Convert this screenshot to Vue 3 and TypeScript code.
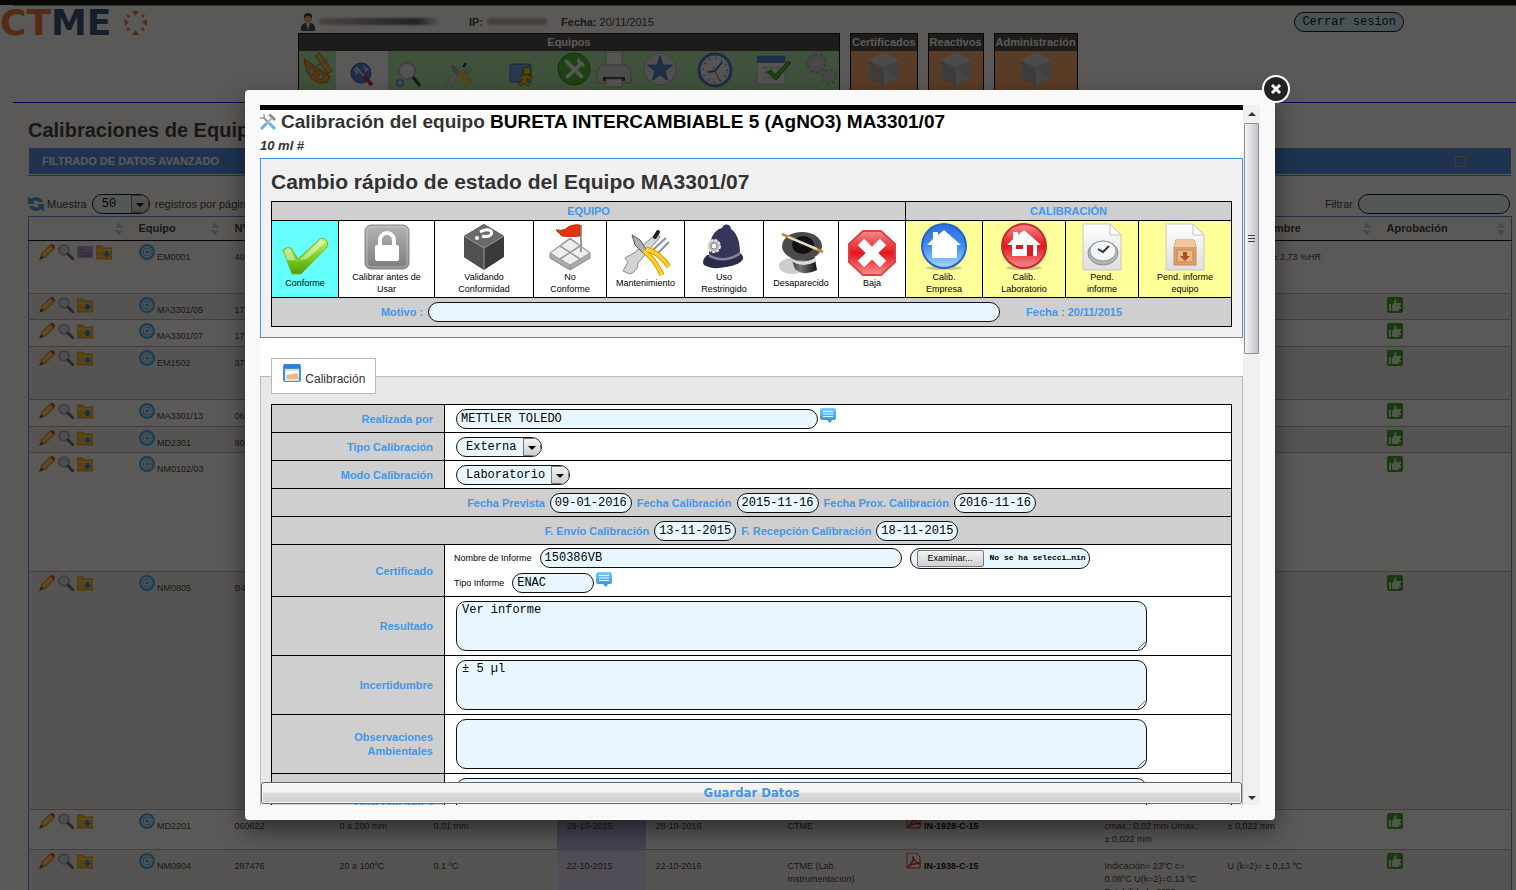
<script setup lang="ts">
import { ref } from 'vue'

interface Row {
  code: string
  serial: string
  height: number
  card?: boolean
  approved: boolean
  range?: string
  division?: string
  calibrated?: string
  next?: string
  lab?: string
  report?: string
  result?: string
  uncertainty?: string
}

interface Status {
  icon: string
  label: string
  tone: string
  width: number
}

const menuIcons = [
  { icon: 'protractor', width: 37, size: 34, low: false, plain: false },
  { icon: 'globe-tool', width: 52, size: 24, low: true, plain: true },
  { icon: 'zoom-add', width: 39, size: 26, low: true, plain: false },
  { icon: 'tools', width: 64, size: 26, low: true, plain: false },
  { icon: 'runner', width: 62, size: 26, low: true, plain: false },
  { icon: 'wrench-ring', width: 42, size: 34, low: false, plain: false },
  { icon: 'printer', width: 38, size: 36, low: false, plain: false },
  { icon: 'star-ring', width: 54, size: 34, low: false, plain: false },
  { icon: 'clock', width: 56, size: 36, low: false, plain: false },
  { icon: 'calendar-ok', width: 60, size: 36, low: false, plain: false },
  { icon: 'gears', width: 36, size: 34, low: false, plain: false },
]

const boxes = ['Certificados', 'Reactivos', 'Administración']

const columns = [
  { label: '', width: 100 },
  { label: 'Equipo', width: 96 },
  { label: 'Nº', width: 105 },
  { label: '', width: 94 },
  { label: '', width: 133 },
  { label: '', width: 89 },
  { label: '', width: 132 },
  { label: '', width: 118 },
  { label: '', width: 199 },
  { label: '', width: 123 },
  { label: 'Incertidumbre', width: 159 },
  { label: 'Aprobación', width: 135 },
]

const rows: Row[] = [
  { code: 'EM0001', serial: '40', height: 53, card: true, approved: false, uncertainty: 'U (k=2,0)=  ± 2,73 %HR' },
  { code: 'MA3301/05', serial: '17', height: 26, approved: true },
  { code: 'MA3301/07', serial: '17', height: 27, approved: true },
  { code: 'EM1502', serial: '37', height: 53, approved: true },
  { code: 'MA3301/13', serial: '06', height: 27, approved: true },
  { code: 'MD2301', serial: '80', height: 26, approved: true },
  { code: 'NM0102/03', serial: '', height: 119, approved: true },
  { code: 'NM0805', serial: 'B4', height: 238, approved: true },
  {
    code: 'MD2201', serial: '060622', height: 40, approved: true, range: '0 a 200 mm', division: '0,01 mm',
    calibrated: '28-10-2015', next: '28-10-2016', lab: 'CTME', report: 'IN-1928-C-15',
    result: 'cmax.: 0,02 mm Umax.:\n± 0,022 mm', uncertainty: '± 0,022 mm',
  },
  {
    code: 'NM0904', serial: '287476', height: 66, approved: true, range: '20 a 100ºC', division: '0.1 ºC',
    calibrated: '22-10-2015', next: '22-10-2016', lab: 'CTME (Lab.\nInstrumentacion)', report: 'IN-1938-C-15',
    result: 'Indicación= 23ºC c=\n0.08ºC U(k=2)=0.13 ºC\nEstabilidad= 23ºC', uncertainty: 'U (k=2)= ± 0,13 ºC',
  },
]

const statuses: Status[] = [
  { icon: 'check', label: 'Conforme', tone: 'current', width: 67 },
  { icon: 'lock', label: 'Calibrar antes de\nUsar', tone: 'plain', width: 96 },
  { icon: 'cube', label: 'Validando\nConformidad', tone: 'plain', width: 99 },
  { icon: 'flag', label: 'No\nConforme', tone: 'plain', width: 73 },
  { icon: 'tools', label: 'Mantenimiento', tone: 'plain', width: 78 },
  { icon: 'helmet', label: 'Uso\nRestringido', tone: 'plain', width: 79 },
  { icon: 'hat', label: 'Desaparecido', tone: 'plain', width: 75 },
  { icon: 'stop', label: 'Baja', tone: 'plain', width: 67 },
  { icon: 'home-blue', label: 'Calib.\nEmpresa', tone: 'yellow', width: 77 },
  { icon: 'home-red', label: 'Calib.\nLaboratorio', tone: 'yellow', width: 83 },
  { icon: 'doc-clock', label: 'Pend.\ninforme', tone: 'yellow', width: 73 },
  { icon: 'doc-box', label: 'Pend. informe\nequipo', tone: 'yellow', width: 93 },
]

const motivo = ref('')
const realizada = ref('METTLER TOLEDO')
const tipo = ref('Externa')
const modo = ref('Laboratorio')
const informe = ref('150386VB')
const tipoInforme = ref('ENAC')
const pageSize = ref('50')
const filter = ref('')

const dateRows = ref([
  [
    { id: 'prevista', label: 'Fecha Prevista', value: '09-01-2016' },
    { id: 'calibracion', label: 'Fecha Calibración', value: '2015-11-16' },
    { id: 'proxima', label: 'Fecha Prox. Calibración', value: '2016-11-16' },
  ],
  [
    { id: 'envio', label: 'F. Envío Calibración', value: '13-11-2015' },
    { id: 'recepcion', label: 'F. Recepción Calibración', value: '18-11-2015' },
  ],
])

const notes = ref([
  { id: 'resultado', label: 'Resultado', value: 'Ver informe' },
  { id: 'incertidumbre', label: 'Incertidumbre', value: '± 5 µl' },
  { id: 'ambientales', label: 'Observaciones\nAmbientales', value: '' },
  { id: 'generales', label: 'Observaciones', value: '' },
])
</script>

<template>
  <svg class="sprite" width="0" height="0" aria-hidden="true">
    <defs>
      <linearGradient id="g-green" x1="0" y1="0" x2="0" y2="1"><stop offset="0" stop-color="#c8f07c" /><stop offset=".5" stop-color="#7ed321" /><stop offset="1" stop-color="#4f9e0c" /></linearGradient>
      <linearGradient id="g-grey" x1="0" y1="0" x2="0" y2="1"><stop offset="0" stop-color="#b4b4b4" /><stop offset="1" stop-color="#7c7c7c" /></linearGradient>
      <linearGradient id="g-blue" x1="0" y1="0" x2="0" y2="1"><stop offset="0" stop-color="#2d6fe0" /><stop offset=".5" stop-color="#3f8df2" /><stop offset="1" stop-color="#a5dcff" /></linearGradient>
      <linearGradient id="g-red" x1="0" y1="0" x2="0" y2="1"><stop offset="0" stop-color="#f58a8a" /><stop offset=".5" stop-color="#e4161e" /><stop offset="1" stop-color="#f88f8f" /></linearGradient>
      <linearGradient id="g-paper" x1="0" y1="0" x2="0" y2="1"><stop offset="0" stop-color="#fff" /><stop offset="1" stop-color="#dedede" /></linearGradient>
      <linearGradient id="g-chat" x1="0" y1="0" x2="0" y2="1"><stop offset="0" stop-color="#7fcdf8" /><stop offset="1" stop-color="#1d8fe0" /></linearGradient>
      <linearGradient id="g-hat" x1="0" y1="0" x2="1" y2="0"><stop offset="0" stop-color="#222" /><stop offset=".4" stop-color="#777" /><stop offset="1" stop-color="#111" /></linearGradient>
    </defs>
    <symbol id="check" viewBox="0 0 48 48"><path d="M2 21 Q6 17 10 19 L17 30 L40 9 Q44 9 46 12 L47 17 L20 45 L11 45 Z" fill="url(#g-green)" stroke="#77b52c" /><path d="M3 22 Q7 18 9 20 L16 33 L40 11 L45 13 L26 30 Q14 32 6 31 Z" fill="#fff" opacity=".45" /></symbol>
    <symbol id="lock" viewBox="0 0 48 48"><rect x="2" y="2" width="44" height="44" rx="6" fill="url(#g-grey)" stroke="#8a8a8a" /><rect x="4" y="4" width="40" height="40" rx="4" fill="none" stroke="#d5d5d5" opacity=".6" /><path d="M17 23 V17 a7 7 0 0 1 14 0 V23" fill="none" stroke="#fff" stroke-width="4" /><rect x="12" y="22" width="24" height="16" rx="2" fill="#fff" /></symbol>
    <symbol id="cube" viewBox="0 0 48 48"><path d="M24 1 L44 13 V34 L24 47 L4 34 V13 Z" fill="#3a3a3a" /><path d="M24 1 L44 13 L24 25 L4 13 Z" fill="#6a6a6a" /><path d="M4 13 L24 25 V47 L4 34 Z" fill="#505050" /><path d="M24 25 V47 M4 13 L24 25 L44 13" stroke="#999" fill="none" /><path d="M20 9 Q27 5 31 8 Q33 11 29 13 Q25 14 22 13" fill="none" stroke="#fff" stroke-width="3" /><circle cx="17" cy="15" r="2" fill="#fff" /></symbol>
    <symbol id="flag" viewBox="0 0 48 48"><path d="M4 30 L24 15 L44 30 V35 L24 47 L4 35 Z" fill="#aaa" stroke="#888" /><path d="M4 30 L24 16 L44 30 L24 42 Z" fill="#eee" stroke="#999" /><path d="M14 23 L34 36 M34 23 L14 36 M24 42 V47" stroke="#999" stroke-width="1.500" /><path d="M35 2 V29" stroke="#999" stroke-width="2" /><path d="M34 2 Q24 1 20 6 Q16 8 10 7 Q14 11 16 13 Q24 14 34 13 Z" fill="#e3350d" stroke="#c42a06" /></symbol>
    <symbol id="tools" viewBox="0 0 48 48"><path d="M35 4 L38 8 L16 34 Q16 42 8 45 L1 42 L6 33 L3 29 L12 24 Z" fill="#d4d4d4" stroke="#888" /><path d="M44 9 L32 20 L28 25 M47 13 L36 24" stroke="#8a8f9c" stroke-width="2" fill="none" /><path d="M33 8 L36 3" stroke="#222" stroke-width="4" stroke-linecap="round" /><path d="M10 6 L18 11 L24 20 L21 24 L13 16 Z" fill="#b0b0b0" stroke="#555" /><path d="M22 22 Q34 32 40 46 M24 20 Q38 24 47 38" fill="none" stroke="#d89b00" stroke-width="5" /><path d="M22 22 Q34 32 40 46 M24 20 Q38 24 47 38" fill="none" stroke="#ffd22e" stroke-width="3" /></symbol>
    <symbol id="helmet" viewBox="0 0 48 48"><path d="M7 32 Q1 38 4 42 Q12 47 26 44 Q40 42 43 36 Q44 33 40 30 Z" fill="#2a2c44" /><path d="M9 33 Q9 8 22 5 Q24 0 29 2 Q31 4 31 6 Q40 12 40 31 Q24 42 9 33 Z" fill="#34365a" /><path d="M9 31 Q24 40 40 29 V32 Q24 42 9 34 Z" fill="#85879c" /><circle cx="14" cy="23" r="6" fill="#bbb" stroke="#e6e6ea" stroke-width="2" stroke-dasharray="3 1" /><circle cx="14" cy="23" r="3" fill="#f5f5f5" stroke="#888" /></symbol>
    <symbol id="hat" viewBox="0 0 48 48"><ellipse cx="15" cy="37" rx="13" ry="8" fill="#999" opacity=".5" /><path d="M12 22 L18 40 Q27 48 40 41 L36 20 Z" fill="url(#g-hat)" /><path d="M14 29 Q25 36 38 29 L38 33 Q26 39 16 33 Z" fill="#ddd" /><ellipse cx="25" cy="17" rx="20" ry="14" fill="#4a4a4a" /><ellipse cx="26" cy="16" rx="11" ry="9" fill="#111" /><path d="M5 5 L46 23" stroke="#c88a2c" stroke-width="3" /><path d="M11 8 L40 20" stroke="#ddd" stroke-width="2" /></symbol>
    <symbol id="stop" viewBox="0 0 48 48"><path d="M15 2 H33 L47 15 V33 L33 46 H15 L1 33 V15 Z" fill="url(#g-red)" stroke="#d9444a" stroke-width="2" /><path d="M13 13 L35 35 M35 13 L13 35" stroke="#fff" stroke-width="9" /></symbol>
    <symbol id="home-blue" viewBox="0 0 48 48"><ellipse cx="24" cy="45" rx="18" ry="2" fill="#777" opacity=".4" /><circle cx="24" cy="23" r="22" fill="url(#g-blue)" stroke="#2a5fc4" stroke-width="2" /><path d="M24 7 L41 22 H37 V35 H12 V22 H7 L13 16 V9 H18 V12 Z" fill="#fff" /></symbol>
    <symbol id="home-red" viewBox="0 0 48 48"><ellipse cx="24" cy="45" rx="18" ry="2" fill="#777" opacity=".4" /><circle cx="24" cy="23" r="22" fill="url(#g-red)" stroke="#c62a30" stroke-width="2" /><path d="M24 7 L41 22 H37 V33 H12 V22 H7 L13 16 V9 H18 V12 Z" fill="#fff" /><path d="M16 22 H23 V26 H16 Z M27 22 H33 V33 H27 Z" fill="#d81920" /></symbol>
    <symbol id="doc-clock" viewBox="0 0 48 48"><path d="M5 1 H32 L43 12 V47 H5 Z" fill="url(#g-paper)" stroke="#c9c9c9" /><path d="M32 1 V12 H43 Z" fill="#fff" stroke="#c0c0c0" /><ellipse cx="25" cy="30" rx="15" ry="12" fill="#aeb4b8" stroke="#8d9398" /><ellipse cx="25" cy="28" rx="13" ry="10" fill="#f4f6f7" stroke="#999" /><path d="M20 26 L25 29 L31 23" fill="none" stroke="#333" stroke-width="2" /></symbol>
    <symbol id="doc-box" viewBox="0 0 48 48"><path d="M5 1 H32 L43 12 V47 H5 Z" fill="url(#g-paper)" stroke="#c9c9c9" /><path d="M32 1 V12 H43 Z" fill="#fff" stroke="#c0c0c0" /><path d="M15 17 H33 L35 24 V42 H13 V24 Z" fill="#e0a068" stroke="#c98a54" /><path d="M15 17 H33 L35 24 H13 Z" fill="#f0c8a0" /><rect x="16" y="27" width="16" height="12" fill="#e9b887" stroke="#c78650" /><path d="M22 29 h4 v4 h3 l-5 5 l-5 -5 h3 Z" fill="#a8501c" /></symbol>
    <symbol id="chat" viewBox="0 0 16 16"><path d="M2 0 H14 Q16 0 16 2 V10 Q16 12 14 12 H12 L10 15 L7 12 H2 Q0 12 0 10 V2 Q0 0 2 0 Z" fill="url(#g-chat)" /><path d="M3 3.500 H13 M3 6 H13 M3 8.500 H13" stroke="#e8f7ff" /></symbol>
    <symbol id="hammer" viewBox="0 0 16 16"><path d="M3 3 L9 9" stroke="#999" stroke-width="2" /><path d="M0 3 Q0 5 3 4 L4 3 Q5 1 3 0" fill="none" stroke="#a5a5a5" stroke-width="1.500" /><path d="M8 1 L11 0 L16 5 L14 7 L11 4" fill="#888" /><path d="M12 4 L7 9" stroke="#b8b8b8" stroke-width="2" /><path d="M7 9 L1 15 M9 9 L15 15" stroke="#5fb4e8" stroke-width="3" /></symbol>
    <symbol id="drawer" viewBox="0 0 20 20"><path d="M2 1 H18 L19 5 V17 Q19 19 17 19 H3 Q1 19 1 17 V5 Z" fill="#4a8fdd" /><path d="M2 1 H18 L19 5 H1 Z" fill="#2f7fe0" /><rect x="3" y="6" width="14" height="12" fill="#d8e4ee" /><path d="M4 8 H16 V12 H4 Z" fill="#fff" /><path d="M5 12 L15 10 L17 16 H5 Z" fill="#e8b88a" /></symbol>
    <symbol id="refresh" viewBox="0 0 16 16"><path d="M0 0 L3 3 Q8 -1 13 3 L15 6 H11 Q7 3 5 6 L7 8 H0 Z" fill="#2b9be0" /><path d="M16 16 L13 13 Q8 17 3 13 L1 10 H5 Q9 13 11 10 L9 8 H16 Z" fill="#2b9be0" /></symbol>
    <symbol id="pencil" viewBox="0 0 16 16"><path d="M0 16 L2 11 L5 14 Z" fill="#7a4a20" /><path d="M2 10 L11 1 L15 5 L6 14 Z" fill="#ffb52e" stroke="#c87a10" stroke-width=".8" /><path d="M4 11 L13 3" stroke="#ffe27a" stroke-width="2" /><path d="M11 1 Q13 -1 15 1 Q17 3 15 5 Z" fill="#f0302a" /></symbol>
    <symbol id="lens" viewBox="0 0 16 16"><circle cx="6" cy="6" r="5" fill="#cfe3ee" stroke="#a3a3a3" stroke-width="1.500" /><path d="M10 10 L15 15" stroke="#666" stroke-width="3" stroke-linecap="round" /></symbol>
    <symbol id="card" viewBox="0 0 16 16"><rect y="2" width="16" height="12" rx="1" fill="#b79ae0" /><rect x="10" y="4" width="4" height="4" fill="#5fb4f5" /><path d="M2 6 H8 M2 9 H14 M2 12 H14" stroke="#8a68b8" stroke-width="1.500" /></symbol>
    <symbol id="folder" viewBox="0 0 16 16"><path d="M0 2 H6 L7 4 H16 V15 H0 Z" fill="#ffb822" stroke="#c88400" stroke-width=".8" /><path d="M1 6 H15" stroke="#ffe08a" /><path d="M9 7 h3 v2.500 h2.500 L10.500 13.500 L6.500 9.500 H9 Z" fill="#1b84f0" /></symbol>
    <symbol id="target" viewBox="0 0 16 16"><circle cx="8" cy="8" r="8" fill="#3fabf0" /><circle cx="8" cy="8" r="5" fill="none" stroke="#d8f0ff" stroke-width="1.500" /><circle cx="8" cy="8" r="2.500" fill="none" stroke="#e8f8ff" stroke-width="1.500" /></symbol>
    <symbol id="thumb" viewBox="0 0 16 16"><rect width="16" height="16" rx="2" fill="#2fa01c" /><path d="M2 7 H4 V14 H2 Z M5 8 L7 6 L8 2 Q10 2 9 6 H14 V8 H13 V10 H14 V12 H12 V14 H6 L5 13 Z" fill="#e4f5e0" /></symbol>
    <symbol id="pdf" viewBox="0 0 16 16"><path d="M1 0 H10 L14 4 V15 H1 Z" fill="#f6f2f2" stroke="#b03030" /><path d="M2 14 Q8 9 7 3 Q7 9 15 11 Q8 9 2 14" fill="none" stroke="#e02020" stroke-width="1.500" /></symbol>
    <symbol id="person" viewBox="0 0 16 18"><path d="M1 18 Q0 11 5 10 H11 Q16 11 15 18 Z" fill="#3a4350" /><path d="M6 10 L8 17 L10 10 Z" fill="#dceaf5" /><circle cx="8" cy="6" r="4" fill="#e8a860" /><path d="M4 6 Q3 0 8 0 Q13 0 12 6 Q11 3 7 3 Q5 3 4 6" fill="#333" /></symbol>
    <symbol id="protractor" viewBox="0 0 36 36"><path d="M3 7 L31 26 L28 32 Q8 38 3 7 Z" fill="#e89a2c" stroke="#a86408" /><circle cx="11" cy="21" r="3" fill="#9fd89f" stroke="#a86408" /><circle cx="21" cy="26" r="3" fill="#9fd89f" stroke="#a86408" /><path d="M15 4 L20 1 L33 20 L28 23 Z" fill="#f0ac3c" stroke="#a86408" /><path d="M5 21 L29 8" stroke="#999" stroke-width="2" /></symbol>
    <symbol id="globe-tool" viewBox="0 0 24 24"><circle cx="11" cy="11" r="10" fill="#3f78d8" stroke="#1e4aa0" /><path d="M4 6 Q9 4 10 9 L6 14 Z M13 3 L19 7 L15 11 Z" fill="#a5c8f5" /><path d="M6 5 L14 14" stroke="#ccc" stroke-width="2" /><path d="M14 14 L22 23" stroke="#d02030" stroke-width="4" /></symbol>
    <symbol id="zoom-add" viewBox="0 0 26 26"><circle cx="12" cy="9" r="8" fill="#e5eef2" stroke="#aaa" stroke-width="1.500" /><path d="M18 15 L25 24" stroke="#333" stroke-width="3" /><circle cx="5" cy="21" r="4" fill="#4a90e0" /><path d="M5 18 V24 M2 21 H8" stroke="#fff" /></symbol>
    <symbol id="runner" viewBox="0 0 26 26"><rect x="1" y="2" width="21" height="18" rx="2" fill="#5c9ce0" stroke="#2a64b0" /><circle cx="18" cy="9" r="4" fill="#f2c218" stroke="#7a5c00" /><path d="M18 14 L15 19 L21 23 M15 18 L10 24 M12 16 L17 14 L23 17" fill="none" stroke="#7a5c00" stroke-width="4" /><path d="M18 14 L15 19 L21 23 M15 18 L10 24 M12 16 L17 14 L23 17" fill="none" stroke="#f2c218" stroke-width="2.500" /></symbol>
    <symbol id="wrench-ring" viewBox="0 0 36 36"><circle cx="18" cy="18" r="17" fill="#3fb82c" stroke="#1f7a14" /><path d="M10 10 L26 26 M26 12 L11 26" stroke="#f5f5f5" stroke-width="4" stroke-linecap="round" /><path d="M23 7 Q22 14 29 14" fill="none" stroke="#f5f5f5" stroke-width="3" /></symbol>
    <symbol id="printer" viewBox="0 0 36 36"><path d="M10 0 H26 V14 H10 Z" fill="#f2f2f2" stroke="#aaa" /><path d="M5 13 H31 L35 20 V31 H1 V20 Z" fill="#d8d8d8" stroke="#999" /><path d="M7 25 H29 V29 H7 Z" fill="#333" /><path d="M10 27 H26 V35 H10 Z" fill="#eee" stroke="#999" /></symbol>
    <symbol id="star-ring" viewBox="0 0 36 36"><circle cx="18" cy="18" r="17" fill="#dfe4ea" stroke="#aab" /><path d="M18 4 L21 14 H31 L23 20 L26 30 L18 24 L10 30 L13 20 L5 14 H15 Z" fill="#3f80d0" stroke="#2a5ca0" /></symbol>
    <symbol id="clock" viewBox="0 0 36 36"><circle cx="18" cy="18" r="16" fill="#e8eef8" stroke="#3f70c8" stroke-width="3" /><circle cx="18" cy="18" r="12" fill="none" stroke="#567" stroke-width="2" stroke-dasharray="1 5.280" /><path d="M18 19 L25 10 M18 19 L11 20" stroke="#2a5cb0" stroke-width="2" /><path d="M16 15 L23 29" stroke="#e05030" /></symbol>
    <symbol id="calendar-ok" viewBox="0 0 36 36"><rect x="2" y="4" width="28" height="28" fill="#f2f2f5" stroke="#aab" /><rect x="2" y="4" width="28" height="7" fill="#3f80d0" /><path d="M6 16 H26 M6 21 H26 M6 26 H26 M11 13 V30 M17 13 V30 M23 13 V30" stroke="#bbc" /><path d="M12 20 L16 18 L20 23 L33 9 L36 11 L21 28 Z" fill="#3fb82c" stroke="#1f7a14" /></symbol>
    <symbol id="gears" viewBox="0 0 36 36"><circle cx="13" cy="12" r="9" fill="none" stroke="#a4a4b4" stroke-width="4" stroke-dasharray="3.500 2.150" /><circle cx="13" cy="12" r="6" fill="none" stroke="#c4c4d4" stroke-width="5" /><circle cx="27" cy="26" r="7" fill="none" stroke="#a4a4b4" stroke-width="3" stroke-dasharray="3 2.500" /><circle cx="27" cy="26" r="4" fill="none" stroke="#c4c4d4" stroke-width="4" /></symbol>
    <symbol id="box" viewBox="0 0 36 36"><path d="M18 1 L33 9 V27 L18 35 L3 27 V9 Z" fill="#c4c4c4" /><path d="M18 1 L33 9 L18 17 L3 9 Z" fill="#d4d4d4" /><path d="M3 9 L18 17 V35 L3 27 Z" fill="#a8a8a8" /><path d="M18 17 L33 27 V9 Z" fill="#b4b4b4" /></symbol>
    <symbol id="sort" viewBox="0 0 8 14"><path d="M4 0 L8 6 H0 Z M4 14 L8 8 H0 Z" fill="#ccc" /></symbol>
    <symbol id="compass" viewBox="0 0 26 26"><path d="M9 1 H16 L12.500 6 Z M9 25 H16 L12.500 20 Z M1 9 L6 12 L2 16 Z M24 9 V16 L19 12 Z" fill="#e87030" /><path d="M3 4 L8 6 L5 8 Z M22 4 L20 8 L18 5 Z M3 21 L5 17 L8 20 Z M22 21 L18 20 L20 17 Z" fill="#e87030" /></symbol>
    <symbol id="close" viewBox="0 0 30 30"><circle cx="15" cy="15" r="13" fill="#222" stroke="#fff" stroke-width="2" /><path d="M11 11 L19 19 M19 11 L11 19" stroke="#fff" stroke-width="3" /></symbol>
  </svg>

  <div class="page">
    <header class="top">
      <a class="logo" href="#" aria-label="CTME"><span class="logo-ct">CT</span><span class="logo-me">ME</span><svg width="26" height="26"><use href="#compass" /></svg></a>
      <div class="center">
        <div class="info">
          <svg width="16" height="18"><use href="#person" /></svg>
          <span class="smear smear-name"></span>
          <b>IP:</b>
          <span class="smear smear-ip"></span>
          <span><b>Fecha:</b> 20/11/2015</span>
        </div>
        <nav class="menus">
          <section class="menu">
            <h2>Equipos</h2>
            <div class="menu-icons">
              <a v-for="m in menuIcons" :key="m.icon" href="#" :class="{ low: m.low, plain: m.plain }" :style="{ width: m.width + 'px' }" :aria-label="m.icon">
                <svg :width="m.size" :height="m.size"><use :href="'#' + m.icon" /></svg>
              </a>
            </div>
          </section>
          <section v-for="b in boxes" :key="b" class="menu menu-orange">
            <h2>{{ b }}</h2>
            <a href="#" :aria-label="b"><svg width="36" height="36"><use href="#box" /></svg></a>
          </section>
        </nav>
      </div>
      <button class="logout" type="button">Cerrar sesion</button>
    </header>

    <main class="main">
      <h1>Calibraciones de Equipos</h1>
      <div class="filter-bar"><span>FILTRADO DE DATOS AVANZADO</span><button type="button" aria-label="Desplegar"></button></div>
      <div class="toolbar">
        <svg width="16" height="16"><use href="#refresh" /></svg>
        <label for="size">Muestra</label>
        <span class="select size"><select id="size" v-model="pageSize"><option>50</option></select><i></i></span>
        <span>registros por página</span>
        <label class="search" for="filter">Filtrar</label>
        <input id="filter" v-model="filter" type="text" class="field filter" />
      </div>
      <table class="data">
        <colgroup><col v-for="(c, i) in columns" :key="i" :style="{ width: c.width + 'px' }" /></colgroup>
        <thead>
          <tr>
            <th v-for="(c, i) in columns" :key="i"><div class="th"><span>{{ c.label }}</span><svg width="8" height="14"><use href="#sort" /></svg></div></th>
          </tr>
        </thead>
        <tbody>
          <tr v-for="r in rows" :key="r.code" :style="{ height: r.height + 'px' }">
            <td class="actions">
              <a href="#" aria-label="Editar"><svg width="16" height="16"><use href="#pencil" /></svg></a>
              <a href="#" aria-label="Ver"><svg width="16" height="16"><use href="#lens" /></svg></a>
              <a v-if="r.card" href="#" aria-label="Ficha"><svg width="16" height="16"><use href="#card" /></svg></a>
              <a href="#" aria-label="Descargar"><svg width="16" height="16"><use href="#folder" /></svg></a>
            </td>
            <td><svg width="16" height="16"><use href="#target" /></svg> {{ r.code }}</td>
            <td>{{ r.serial }}</td>
            <td>{{ r.range }}</td>
            <td>{{ r.division }}</td>
            <td class="sorted">{{ r.calibrated }}</td>
            <td>{{ r.next }}</td>
            <td>{{ r.lab }}</td>
            <td><a v-if="r.report" class="report" href="#"><svg width="16" height="16"><use href="#pdf" /></svg> {{ r.report }}</a></td>
            <td>{{ r.result }}</td>
            <td>{{ r.uncertainty }}</td>
            <td><svg v-if="r.approved" width="16" height="16"><use href="#thumb" /></svg></td>
          </tr>
        </tbody>
      </table>
    </main>
  </div>

  <div class="overlay">
    <div class="modal" role="dialog" aria-modal="true">
      <button class="close" type="button" aria-label="Cerrar"><svg width="30" height="30"><use href="#close" /></svg></button>
      <div class="frame">
        <div class="content">
          <h2 class="title"><svg width="16" height="16"><use href="#hammer" /></svg><span>Calibración del equipo <strong>BURETA INTERCAMBIABLE 5 (AgNO3) MA3301/07</strong></span></h2>
          <p class="subtitle">10 ml #</p>

          <section class="quick">
            <h3>Cambio rápido de estado del Equipo MA3301/07</h3>
            <table class="status">
              <colgroup><col v-for="s in statuses" :key="s.label" :style="{ width: s.width + 'px' }" /></colgroup>
              <thead><tr><th colspan="8">EQUIPO</th><th colspan="4">CALIBRACIÓN</th></tr></thead>
              <tbody>
                <tr class="choices">
                  <td v-for="s in statuses" :key="s.label" :class="s.tone">
                    <button type="button"><svg width="48" height="48"><use :href="'#' + s.icon" /></svg><span>{{ s.label }}</span></button>
                  </td>
                </tr>
                <tr class="reason">
                  <td colspan="12">
                    <div class="reason-line">
                      <label for="motivo">Motivo :</label>
                      <input id="motivo" v-model="motivo" type="text" class="field motivo" />
                      <b>Fecha : 20/11/2015</b>
                    </div>
                  </td>
                </tr>
              </tbody>
            </table>
          </section>

          <fieldset>
            <legend><svg width="20" height="20"><use href="#drawer" /></svg> Calibración</legend>
            <table class="form">
              <tbody>
                <tr>
                  <th><label for="realizada">Realizada por</label></th>
                  <td><div class="line"><input id="realizada" v-model="realizada" type="text" class="field long" /><svg class="chat" width="16" height="16"><use href="#chat" /></svg></div></td>
                </tr>
                <tr>
                  <th><label for="tipo">Tipo Calibración</label></th>
                  <td><div class="line"><span class="select tipo"><select id="tipo" v-model="tipo"><option>Externa</option></select><i></i></span></div></td>
                </tr>
                <tr>
                  <th><label for="modo">Modo Calibración</label></th>
                  <td><div class="line"><span class="select modo"><select id="modo" v-model="modo"><option>Laboratorio</option></select><i></i></span></div></td>
                </tr>
                <tr v-for="(group, g) in dateRows" :key="g">
                  <td colspan="2" class="dates">
                    <div class="date-line">
                      <template v-for="d in group" :key="d.id"><label :for="d.id">{{ d.label }}</label><input :id="d.id" v-model="d.value" type="text" class="field date" /></template>
                    </div>
                  </td>
                </tr>
                <tr class="certificate">
                  <th>Certificado</th>
                  <td>
                    <div class="small-line">
                      <label for="informe">Nombre de Informe</label><input id="informe" v-model="informe" type="text" class="field long" />
                      <label class="file" for="archivo"><input id="archivo" type="file" /><span class="browse">Examinar...</span><span class="file-name">No se ha selecci…nin</span></label>
                    </div>
                    <div class="small-line">
                      <label for="tipo-informe">Tipo Informe</label><input id="tipo-informe" v-model="tipoInforme" type="text" class="field date" />
                      <svg class="chat" width="16" height="16"><use href="#chat" /></svg>
                    </div>
                  </td>
                </tr>
                <tr v-for="n in notes" :key="n.id" class="note">
                  <th><label :for="n.id">{{ n.label }}</label></th>
                  <td><textarea :id="n.id" v-model="n.value"></textarea></td>
                </tr>
              </tbody>
            </table>
          </fieldset>
          <button class="save" type="button">Guardar Datos</button>
        </div>
        <div class="scrollbar" aria-hidden="true"><span class="arrow up"></span><span class="thumb"><i></i><i></i><i></i></span><span class="arrow down"></span></div>
      </div>
    </div>
  </div>
</template>

<style>
body { background: #fff; }
</style>

<style scoped>
* { box-sizing: border-box; }
.page, .overlay { font-family: "Liberation Sans", Arial, sans-serif; font-size: 11px; color: #333; }
.sprite { position: absolute; }
svg { flex: none; }
a { color: inherit; text-decoration: none; }
h1, h2, h3, p { margin: 0; }
button { cursor: pointer; }

.page { height: 100vh; overflow: hidden; background: #fff; border-top: 5px solid #000; }
.top { display: flex; align-items: flex-start; height: 98px; border-top: 1px solid #4489e8; border-bottom: 1px solid #00f; margin-left: 13px; }
.logo { display: flex; align-items: center; width: 285px; margin-left: -13px; margin-right: 13px; height: 34px; font: bold 36px/34px "DejaVu Sans", sans-serif; }
.logo svg { margin-left: 12px; }
.logo-ct { color: #e87030; }
.logo-me { color: #24487c; }
.info { display: flex; align-items: center; height: 27px; padding: 4px 0 0 2px; white-space: nowrap; }
.smear { height: 7px; border-radius: 4px; filter: blur(1px); }
.smear-name { width: 122px; margin: 0 28px 0 3px; background: linear-gradient(90deg, #c8c0bc, #888 40%, #555 80%, #fff); }
.smear-ip { width: 60px; margin: 0 14px 0 4px; background: #b8b0ac; }
.menus { display: flex; gap: 10px; }
.menu { height: 62px; border: 1px solid #000; background: #a8e8a8; }
.menu h2 { height: 17px; background: #424242; color: #fff; font-size: 11px; line-height: 17px; text-align: center; }
.menu-icons { display: flex; height: 43px; }
.menu-icons a { display: flex; align-items: flex-start; justify-content: center; padding-top: 1px; }
.menu-icons .low { padding-top: 11px; }
.menu-icons .plain { background: #fff; }
.menu-orange { background: #f4a468; }
.menu-orange h2 { padding: 0 1px; }
.menu-orange a { display: flex; justify-content: center; }
.logout { height: 20px; margin: 6px 112px 0 auto; padding: 0 7px; border: 1px solid #000; border-radius: 10px; background: #c8ecff; font: 12px/16px "Liberation Mono", monospace; color: #000; }

.main { padding: 9px 5px 0 28px; }
h1 { font-size: 20px; line-height: 36px; }
.filter-bar { display: flex; align-items: center; justify-content: space-between; height: 26px; padding: 0 45px 0 13px; background: #4489e8; color: #fff; font-weight: bold; border-left: 1px solid #fff; box-shadow: 0 1px #fff, 0 2px #4489e8; }
.filter-bar button { width: 11px; height: 11px; padding: 0; border: 1px solid #b8a090; background: none; }
.toolbar { display: flex; align-items: center; height: 42px; padding-top: 18px; }
.toolbar label { margin: 0 5px 0 3px; }
.toolbar .size { width: 58px; margin-right: 5px; }
.toolbar .search { margin-left: auto; }
.toolbar .filter { width: 152px; margin-right: 1px; }
.data { width: 100%; table-layout: fixed; border-collapse: collapse; border: 1px solid #4489e8; font-size: 9px; line-height: 13px; }
.data th { height: 24px; padding: 0 6px 0 10px; border-bottom: 1px solid #000; text-align: left; font-size: 11px; }
.th { display: flex; align-items: center; justify-content: space-between; }
.data td { padding: 3px 0 0 10px; vertical-align: baseline; border-bottom: 1px solid #b0b0b0; white-space: pre-line; }
.data td svg { vertical-align: baseline; }
.data tbody tr:nth-child(even) { background: #f0f0f0; }
.data tbody tr:nth-child(odd) .sorted { background: #bbb8f0; }
.data tbody tr:nth-child(even) .sorted { background: #e0dafa; }
.data .actions { white-space: nowrap; }
.actions a { margin-right: 3px; }
.report { font-weight: bold; color: #000; }

.overlay { position: fixed; inset: 0; display: flex; padding: 90px 241px 70px 245px; background: rgba(13, 10, 7, .68); }
.modal { position: relative; flex: 1; min-width: 0; padding: 15px; border-radius: 4px; background: #f9f9f9; box-shadow: 0 10px 25px rgba(0, 0, 0, .5); }
.close { position: absolute; top: -16px; right: -16px; padding: 0; width: 30px; height: 30px; border: 0; background: none; }
.frame { display: flex; height: 100%; }
.content { position: relative; flex: 1; min-width: 0; overflow: hidden; border-top: 5px solid #000; background: #fff; }
.title { display: flex; align-items: center; gap: 5px; font-size: 19px; line-height: 24px; white-space: nowrap; }
.title strong { color: #000; }
.subtitle { font: italic bold 13px/24px "Liberation Sans", Arial, sans-serif; }
.quick { padding: 4px 10px 10px; border: 1px solid #3f92ea; background: #f1f1f1; }
.quick h3 { font-size: 21px; line-height: 38px; }
.status, .form { width: 100%; table-layout: fixed; border-collapse: collapse; }
.status th, .status td, .form th, .form td { border: 1px solid #000; }
.status th { height: 19px; padding: 0; background: #cfcfcf; color: #3f97ee; font-size: 11px; line-height: 16px; }
.status td { height: 77px; padding: 0; background: #fff; }
.status .current { background: #66ffff; }
.status .yellow { background: #ffff99; }
.status button { display: flex; flex-direction: column; align-items: center; justify-content: center; width: 100%; height: 74px; padding: 0; border: 0; background: none; color: #000; font: 9px/12px "Liberation Sans", Arial, sans-serif; white-space: pre-line; }
.status .reason td { height: 29px; background: #cfcfcf; }
.reason-line { display: flex; align-items: center; justify-content: center; color: #3f97ee; font-weight: bold; }
.motivo { width: 572px; max-width: 70%; margin: 0 26px 0 5px; }
.field { height: 20px; padding: 0 4px; border: 1px solid #111; border-radius: 10px; background: #e8f7ff; color: #000; font: 12px/16px "Liberation Mono", "Courier New", monospace; }
.select { position: relative; display: inline-flex; height: 20px; border: 1px solid #111; border-radius: 10px; background: #e8f7ff; overflow: hidden; }
.select select { width: 100%; padding: 0 18px 0 9px; border: 0; appearance: none; background: none; color: #000; font: 12px/16px "Liberation Mono", "Courier New", monospace; }
.select i { position: absolute; top: 0; right: 0; width: 18px; height: 18px; border: 1px solid #777; background: linear-gradient(#f2f2f2, #cfcfcf); pointer-events: none; }
.select i::after { content: ""; display: block; width: 0; height: 0; margin: 7px 0 0 4px; border: 4px solid transparent; border-top-color: #000; border-bottom: 0; }
.tipo { width: 86px; }
.modo { width: 114px; }

fieldset { min-width: 0; margin: 20px 0 0; padding: 10px; border: 1px solid #b9b9b9; background: #e8e8e8; }
legend { height: 36px; padding: 4px 10px 0 10px; border: 1px solid #b9b9b9; background: #fff; font-size: 12px; line-height: 24px; }
.form th { width: 173px; height: 28px; padding: 0 11px 0 0; background: #cfcfcf; text-align: right; color: #3f97ee; font-size: 11px; line-height: 14px; white-space: pre-line; }
.form td { height: 28px; padding: 0 0 0 9px; background: #fff; }
.form .dates { padding: 0; background: #cfcfcf; }
.line { display: flex; align-items: center; padding-left: 2px; }
.chat { margin: 0 0 6px 2px; }
.long { width: 362px; }
.date-line { display: flex; align-items: center; justify-content: center; gap: 5px; color: #3f97ee; font-weight: bold; }
.date { width: 82px; }
.form .certificate td { height: 52px; color: #000; font-size: 9px; }
.small-line { display: flex; align-items: center; gap: 8px; height: 25px; }
.small-line .chat { margin-left: -6px; }
.file { position: relative; display: flex; align-items: center; gap: 6px; width: 180px; height: 21px; padding-left: 6px; border: 1px solid #111; border-radius: 10px; background: #e8f7ff; overflow: hidden; white-space: nowrap; }
.file input { position: absolute; width: 1px; height: 1px; opacity: 0; }
.browse { flex: none; width: 67px; height: 17px; border: 1px solid #777; border-radius: 2px; background: linear-gradient(#f3f3f3, #d2d2d2); text-align: center; line-height: 15px; }
.file-name { font: bold 8px/12px "Liberation Mono", monospace; }
.form .note th, .form .note td { height: 59px; }
.note textarea { display: block; width: 691px; max-width: 98%; height: 50px; margin-left: 2px; padding: 1px 5px; border: 1px solid #111; border-radius: 10px; background: #e8f7ff; color: #000; font: 12px/15px "Liberation Mono", "Courier New", monospace; resize: both; }
.save { position: absolute; left: 1px; right: 1px; bottom: 1px; height: 22px; padding: 0; border: 1px solid #666; border-radius: 3px; background: linear-gradient(#f4f4f4 0 45%, #dcdcdc 50%, #cecece); box-shadow: inset 0 0 0 1px #f8f8f8; color: #3f97ee; font: bold 13px/18px "DejaVu Sans Condensed", "DejaVu Sans", Verdana, sans-serif; }
.scrollbar { flex: none; display: flex; flex-direction: column; align-items: center; width: 17px; background: #f0f0f0; }
.arrow { flex: none; width: 0; height: 0; border: 4px solid transparent; }
.up { margin-top: 3px; border-bottom-color: #333; }
.down { margin: auto 0 1px; border-top-color: #333; }
.thumb { display: flex; flex-direction: column; align-items: center; justify-content: center; gap: 2px; width: 15px; height: 33%; margin-top: 7px; border: 1px solid #8e8e92; border-radius: 1px; background: linear-gradient(90deg, #f6f6f6, #dcdce0 50%, #c4c4c8); }
.thumb i { width: 7px; height: 1px; background: #444; }
</style>
